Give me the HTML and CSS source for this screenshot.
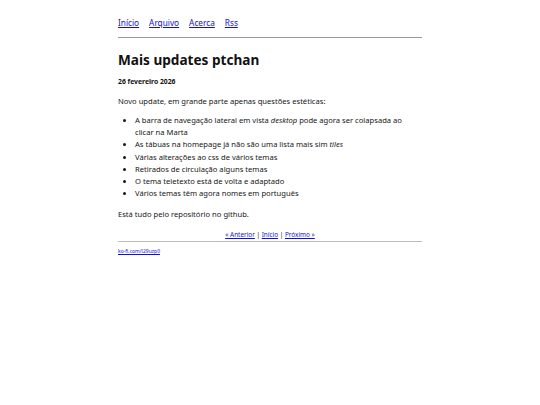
FILE: index.html
```html
<!DOCTYPE html>
<html lang="pt">
<head>
<meta charset="utf-8">
<title>Mais updates ptchan</title>
<link rel="stylesheet" href="styles.css">
</head>
<body>
<div class="page">
  <nav class="nav">
    <a href="#">Início</a>
    <a href="#">Arquivo</a>
    <a href="#">Acerca</a>
    <a href="#">Rss</a>
  </nav>
  <hr class="rule">
  <article class="post">
    <h1 class="title">Mais updates ptchan</h1>
    <p class="date">26 fevereiro 2026</p>
    <p class="text text-intro">Novo update, em grande parte apenas questões estéticas:</p>
    <ul class="list">
      <li>A barra de navegação lateral em vista <em>desktop</em> pode agora ser colapsada ao clicar na Marta</li>
      <li>As tábuas na homepage já não são uma lista mais sim <em>tiles</em></li>
      <li>Várias alterações ao css de vários temas</li>
      <li>Retirados de circulação alguns temas</li>
      <li>O tema teletexto está de volta e adaptado</li>
      <li>Vários temas têm agora nomes em português</li>
    </ul>
    <p class="text text-end">Está tudo pelo repositório no github.</p>
  </article>
  <div class="pager"><a href="#">« Anterior</a> | <a href="#">Início</a> | <a href="#">Próximo »</a></div>
  <hr class="rule rule-foot">
  <footer class="foot"><a href="#">ko-fi.com/l29uzp0</a></footer>
</div>
</body>
</html>
```
FILE: styles.css
```css
html, body { margin: 0; padding: 0; background: #fff; }
body {
  font-family: "Noto Sans", "Open Sans", sans-serif;
  color: #161616;
  font-size: 7.6px;
  line-height: 12px;
}
a { color: #1010dd; }
.page {
  width: 304px;
  margin: 0 auto;
  padding-top: 17px;
}
.nav {
  display: flex;
  gap: 10px;
  font-size: 8.25px;
  line-height: 12px;
}
.rule {
  border: 0;
  border-top: 1px solid #999;
  margin: 8px 0 0 0;
}
.title {
  font-size: 13.6px;
  line-height: 20px;
  font-weight: bold;
  margin: 12px 0 0 0;
  color: #111;
}
.date {
  font-size: 6.8px;
  font-weight: bold;
  margin: 7px 0 0 0;
  line-height: 10px;
  color: #111;
}
.text { margin: 0; }
.text-intro { margin-top: 8px; }
.text-end { margin-top: 9px; }
.list {
  margin: 7px 0 0 0;
  padding-left: 17px;
}
.list li { line-height: 12.2px; }
.pager {
  text-align: center;
  font-size: 6.4px;
  line-height: 10px;
  margin-top: 10px;
}
.rule-foot { margin-top: 1px; border-top-color: #bbb; }
.foot {
  font-size: 5px;
  line-height: 8px;
  margin-top: 5px;
}
```
